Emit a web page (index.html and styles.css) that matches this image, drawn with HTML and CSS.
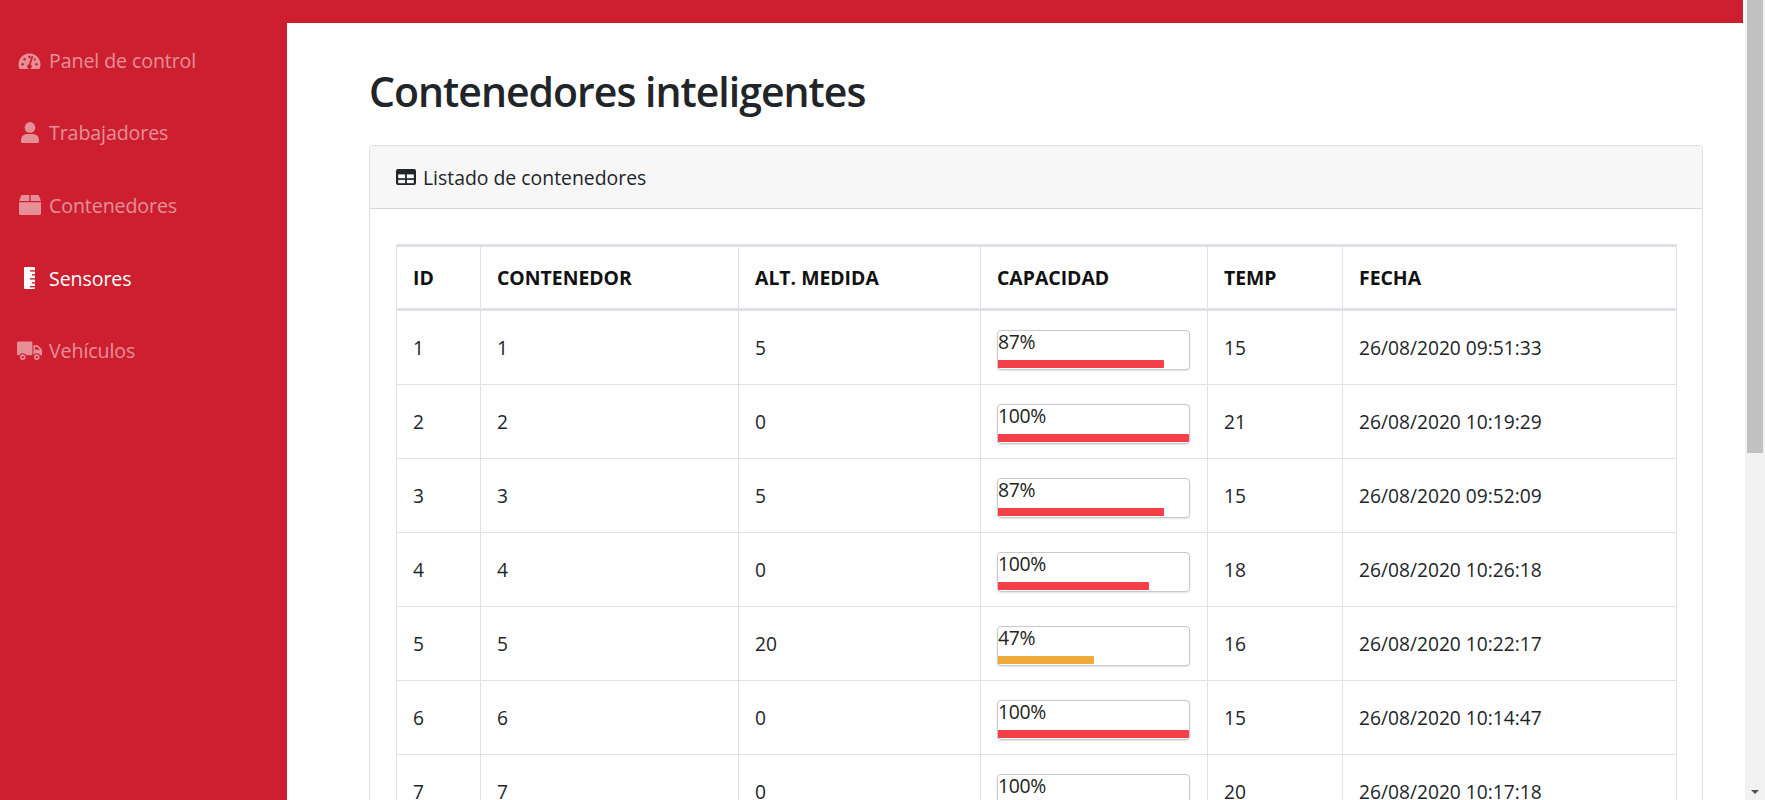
FILE: index.html
```html
<!DOCTYPE html>
<html lang="es">
<head>
<meta charset="utf-8">
<title>Contenedores inteligentes</title>
<link rel="stylesheet" href="styles.css">
</head>
<body>
<div class="page">
  <div class="app">
    <nav class="sidebar">
      <a class="nav-item">
        <span class="ico"><svg width="25" height="17" viewBox="0 0 25 17"><path d="M2.5 17 A11 11 0 1 1 22.5 17 Z" fill="currentColor"/><g fill="#cd1f2f"><circle cx="5.6" cy="12.2" r="1.3"/><circle cx="7.6" cy="7.2" r="1.3"/><circle cx="12.5" cy="5" r="1.3"/><circle cx="19.4" cy="12.2" r="1.3"/><circle cx="17.6" cy="7.4" r="1.1"/><circle cx="12.5" cy="14.6" r="2.3"/></g><path d="M12.2 14.4 L15.2 4.8" stroke="#cd1f2f" stroke-width="1.8" stroke-linecap="round"/></svg></span>
        <span>Panel de control</span>
      </a>
      <a class="nav-item">
        <span class="ico"><svg width="18" height="21" viewBox="0 0 18 21"><circle cx="9" cy="5.4" r="5.3" fill="currentColor"/><path d="M0 19.4 V18 A6 6 0 0 1 6 12 H12 A6 6 0 0 1 18 18 V19.4 A1.6 1.6 0 0 1 16.4 21 H1.6 A1.6 1.6 0 0 1 0 19.4 Z" fill="currentColor"/></svg></span>
        <span>Trabajadores</span>
      </a>
      <a class="nav-item">
        <span class="ico"><svg width="22" height="20" viewBox="0 0 22 20"><path d="M2.4 0 H10.3 V6 H0 Z M11.7 0 H19.6 L22 6 H11.7 Z" fill="currentColor"/><path d="M0 7.2 H22 V18.4 A1.6 1.6 0 0 1 20.4 20 H1.6 A1.6 1.6 0 0 1 0 18.4 Z" fill="currentColor"/></svg></span>
        <span>Contenedores</span>
      </a>
      <a class="nav-item active">
        <span class="ico"><svg width="11" height="22" viewBox="0 0 11 22"><rect x="0" y="0" width="11" height="22" rx="1" fill="currentColor"/><g fill="#cd1f2f"><rect x="6" y="3.2" width="5" height="1.4"/><rect x="8" y="7.2" width="3" height="1.4"/><rect x="6" y="11.2" width="5" height="1.4"/><rect x="8" y="15.2" width="3" height="1.4"/><rect x="6" y="19" width="5" height="1.4"/></g></svg></span>
        <span>Sensores</span>
      </a>
      <a class="nav-item">
        <span class="ico"><svg width="26" height="20" viewBox="0 0 26 20"><rect x="0" y="0" width="16" height="14.5" rx="1.5" fill="currentColor"/><path d="M17 4 H21.6 L26 8.4 V14.5 H17 Z" fill="currentColor"/><path d="M18.8 5.8 H21 L23.8 8.6 H18.8 Z" fill="#cd1f2f"/><circle cx="6" cy="16.4" r="3.4" fill="currentColor" stroke="#cd1f2f" stroke-width="1.1"/><circle cx="20.6" cy="16.4" r="3.4" fill="currentColor" stroke="#cd1f2f" stroke-width="1.1"/><circle cx="6" cy="16.4" r="1.2" fill="#cd1f2f"/><circle cx="20.6" cy="16.4" r="1.2" fill="#cd1f2f"/></svg></span>
        <span>Vehículos</span>
      </a>
    </nav>
    <div class="main">
      <div class="topbar"></div>
      <div class="content">
        <h1 class="title">Contenedores inteligentes</h1>
        <section class="card">
          <header class="card-header">
            <svg class="table-ico" width="20" height="16" viewBox="0 0 20 16"><rect x="0" y="0" width="20" height="16" rx="2" fill="#212529"/><g fill="#fff"><rect x="2.2" y="5.4" width="6.9" height="3.8"/><rect x="10.9" y="5.4" width="6.9" height="3.8"/><rect x="2.2" y="10.9" width="6.9" height="3.3"/><rect x="10.9" y="10.9" width="6.9" height="3.3"/></g></svg>
            <span>Listado de contenedores</span>
          </header>
          <div class="card-body">
            <table class="grid">
              <colgroup>
                <col class="c-id"><col class="c-cont"><col class="c-alt"><col class="c-cap"><col class="c-temp"><col class="c-fecha">
              </colgroup>
              <thead>
                <tr><th>ID</th><th>CONTENEDOR</th><th>ALT. MEDIDA</th><th>CAPACIDAD</th><th>TEMP</th><th>FECHA</th></tr>
              </thead>
              <tbody>
                <tr><td>1</td><td>1</td><td>5</td><td><div class="meter"><span class="meter-label">87%</span><span class="meter-bar red" style="width:87%"></span></div></td><td>15</td><td>26/08/2020 09:51:33</td></tr>
                <tr><td>2</td><td>2</td><td>0</td><td><div class="meter"><span class="meter-label">100%</span><span class="meter-bar red" style="width:100%"></span></div></td><td>21</td><td>26/08/2020 10:19:29</td></tr>
                <tr><td>3</td><td>3</td><td>5</td><td><div class="meter"><span class="meter-label">87%</span><span class="meter-bar red" style="width:87%"></span></div></td><td>15</td><td>26/08/2020 09:52:09</td></tr>
                <tr><td>4</td><td>4</td><td>0</td><td><div class="meter"><span class="meter-label">100%</span><span class="meter-bar red" style="width:79%"></span></div></td><td>18</td><td>26/08/2020 10:26:18</td></tr>
                <tr><td>5</td><td>5</td><td>20</td><td><div class="meter"><span class="meter-label">47%</span><span class="meter-bar amber" style="width:50%"></span></div></td><td>16</td><td>26/08/2020 10:22:17</td></tr>
                <tr><td>6</td><td>6</td><td>0</td><td><div class="meter"><span class="meter-label">100%</span><span class="meter-bar red" style="width:100%"></span></div></td><td>15</td><td>26/08/2020 10:14:47</td></tr>
                <tr><td>7</td><td>7</td><td>0</td><td><div class="meter"><span class="meter-label">100%</span><span class="meter-bar red" style="width:100%"></span></div></td><td>20</td><td>26/08/2020 10:17:18</td></tr>
              </tbody>
            </table>
          </div>
        </section>
      </div>
    </div>
  </div>
  <div class="scrollbar"><div class="thumb"></div><div class="arrow-down"></div></div>
</div>
</body>
</html>
```

FILE: styles.css
```css
* { box-sizing: border-box; }
html, body { margin: 0; padding: 0; }
body {
  font-family: "Open Sans", "Noto Sans", sans-serif;
  font-size: 19px;
  color: #212529;
  background: #fff;
  overflow: hidden;
}
.page {
  display: flex;
  width: 1765px;
  height: 800px;
  overflow: hidden;
}
.app {
  flex: 1;
  display: flex;
  min-width: 0;
}
.sidebar {
  width: 287px;
  flex: none;
  background: #cd1f2f;
  padding-top: 24px;
  display: flex;
  flex-direction: column;
}
.nav-item {
  height: 72.6px;
  flex: none;
  display: flex;
  align-items: center;
  gap: 7px;
  padding-left: 17px;
  color: rgba(255, 255, 255, 0.5);
  text-decoration: none;
  font-size: 19.6px;
  letter-spacing: -0.1px;
}
.nav-item.active { color: #fff; }
.ico {
  width: 25px;
  display: flex;
  justify-content: center;
  align-items: center;
}
.ico svg { display: block; }
.main {
  flex: 1;
  display: flex;
  flex-direction: column;
  background: #fff;
  min-width: 0;
}
.topbar {
  height: 23px;
  background: #cd1f2f;
  margin-right: 2px;
  flex: none;
}
.content {
  padding: 44px 42px 0 82px;
}
.title {
  margin: 0 0 29px;
  font-size: 41px;
  line-height: 1.2;
  font-weight: 600;
  letter-spacing: -1px;
  color: #212529;
}
.card {
  border: 1px solid rgba(0, 0, 0, 0.125);
  border-radius: 5px;
  background: #fff;
}
.card-header {
  height: 63px;
  background: #f7f7f7;
  border-bottom: 1px solid rgba(0, 0, 0, 0.125);
  border-radius: 5px 5px 0 0;
  display: flex;
  align-items: center;
  gap: 7px;
  padding-left: 26px;
  font-size: 19.4px;
}
.table-ico { display: block; }
.card-body {
  padding: 35px 26px 26px;
}
.grid {
  width: 1280px;
  table-layout: fixed;
  border-collapse: separate;
  border-spacing: 0;
  border-top: 3px solid #dee2e6;
  border-left: 1px solid #dee2e6;
}
.c-id { width: 84px; }
.c-cont { width: 258px; }
.c-alt { width: 242px; }
.c-cap { width: 227px; }
.c-temp { width: 135px; }
.c-fecha { width: 334px; }
.grid th, .grid td {
  border-right: 1px solid #dee2e6;
  border-bottom: 1px solid #dee2e6;
  padding: 0 16px;
  text-align: left;
  vertical-align: middle;
}
.grid th {
  height: 64px;
  border-bottom: 3px solid #dee2e6;
  font-weight: 700;
  font-size: 19.4px;
  color: #111;
}
.grid td {
  height: 74px;
  font-size: 19.2px;
}
.meter {
  width: 193px;
  height: 40px;
  margin-top: 4px;
  border: 1px solid #c9c9c9;
  border-radius: 4px;
  box-shadow: 0 1px 2px rgba(0, 0, 0, 0.12);
  display: flex;
  flex-direction: column;
  justify-content: space-between;
  background: #fff;
}
.meter-label {
  font-size: 19.4px;
  line-height: 22px;
  color: #222;
  margin-top: 0;
  letter-spacing: -0.3px;
}
.meter-bar {
  display: block;
  height: 8px;
  margin-bottom: 1px;
  border-radius: 0 1px 1px 0;
}
.meter-bar.red { background: #f33f47; }
.meter-bar.amber { background: #efac3b; }
.scrollbar {
  width: 20px;
  flex: none;
  background: #f1f1f1;
  display: flex;
  flex-direction: column;
  align-items: center;
}
.thumb {
  width: 16px;
  height: 453px;
  background: #c1c1c1;
}
.arrow-down {
  margin-top: auto;
  margin-bottom: 6px;
  width: 0;
  height: 0;
  border-left: 4px solid transparent;
  border-right: 4px solid transparent;
  border-top: 4px solid #505050;
}
```
